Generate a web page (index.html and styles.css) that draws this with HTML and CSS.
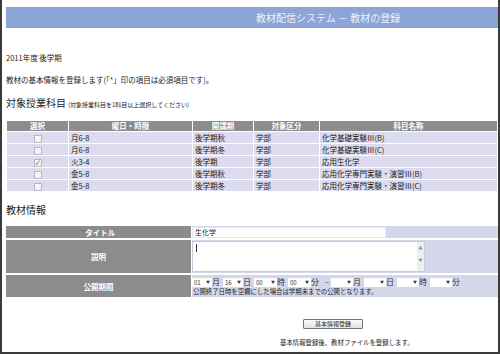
FILE: index.html
```html
<!DOCTYPE html>
<html>
<head>
<meta charset="UTF-8">
<title>教材の登録</title>
<link rel="stylesheet" href="styles.css">
</head>
<body>
<div class="frame">
    <!--タイトルバー-->
    <div class="head">教材配信システム － 教材の登録</div>

    <p class="term">2011年度 後学期</p>
    <p class="intro">教材の基本情報を登録します(「*」印の項目は必須項目です)。</p>

    <!--対象授業科目-->
    <h2 class="sec">対象授業科目<small>(対象授業科目を1科目以上選択してください)</small></h2>
    <table class="list">
        <thead>
        <tr>
            <th class="c1">選択</th>
            <th class="c2">曜日・時限</th>
            <th class="c3">開講期</th>
            <th class="c4">対象区分</th>
            <th>科目名称</th>
        </tr>
        </thead>
        <tbody>
        <tr>
            <td class="chk"><span class="cb"></span></td>
            <td>月6-8</td>
            <td>後学期秋</td>
            <td>学部</td>
            <td>化学基礎実験Ⅲ(B)</td>
        </tr>
        <tr>
            <td class="chk"><span class="cb"></span></td>
            <td>月6-8</td>
            <td>後学期冬</td>
            <td>学部</td>
            <td>化学基礎実験Ⅲ(C)</td>
        </tr>
        <tr>
            <td class="chk"><span class="cb on">✓</span></td>
            <td>火3-4</td>
            <td>後学期</td>
            <td>学部</td>
            <td>応用生化学</td>
        </tr>
        <tr>
            <td class="chk"><span class="cb"></span></td>
            <td>金5-8</td>
            <td>後学期秋</td>
            <td>学部</td>
            <td>応用化学専門実験・演習Ⅲ(B)</td>
        </tr>
        <tr>
            <td class="chk"><span class="cb"></span></td>
            <td>金5-8</td>
            <td>後学期冬</td>
            <td>学部</td>
            <td>応用化学専門実験・演習Ⅲ(C)</td>
        </tr>
        </tbody>
    </table>

    <!--教材情報-->
    <h2 class="sec sec2">教材情報</h2>
    <table class="form">
        <tr class="r-title">
            <th><span class="req">*</span>タイトル</th>
            <td><div class="txt">生化学</div></td>
        </tr>
        <tr class="r-desc">
            <th>説明</th>
            <td><div class="area"><span class="caret"></span><span class="bar">▲<br>▼</span></div></td>
        </tr>
        <tr class="r-date">
            <th>公開期間</th>
            <td>
                <div class="dates">
                    <span class="sel">01</span><span class="u">月</span>
                    <span class="sel">16</span><span class="u">日</span>
                    <span class="sel w">00</span><span class="u">時</span>
                    <span class="sel w">00</span><span class="u">分</span>
                    <span class="dash">－</span>
                    <span class="sel x"></span><span class="u">月</span>
                    <span class="sel x"></span><span class="u">日</span>
                    <span class="sel x"></span><span class="u">時</span>
                    <span class="sel x"></span><span class="u">分</span>
                </div>
                <div class="note">公開終了日時を空欄にした場合は学期末までの公開となります。</div>
            </td>
        </tr>
    </table>

    <div class="submit"><span class="btn">基本情報登録</span></div>
    <p class="after">基本情報登録後、教材ファイルを登録します。</p>
</div>
</body>
</html>
```

FILE: styles.css
```css
* {
    padding: 0;
    margin: 0;
}

body {
    font-family: "Noto Sans CJK JP", "Noto Sans", sans-serif;
    color: #222;
    background: #fff;
}

.frame {
    width: 500px;
    height: 354px;
    box-sizing: border-box;
    border: 2px solid #3a3a3a;
    border-top: 0;
    padding-left: 4px;
    overflow: hidden;
}

.head {
    margin-top: 7px;
    height: 21px;
    line-height: 21px;
    background-color: #8da4d6;
    color: #eef0fa;
    font-size: 10px;
    padding-left: 250px;
}

.term {
    margin-top: 25px;
    font-size: 7.5px;
    line-height: 10px;
}

.intro {
    margin-top: 12px;
    font-size: 7.5px;
    line-height: 10px;
}

.sec {
    margin-top: 11px;
    font-size: 10px;
    font-weight: normal;
    line-height: 14px;
}

.sec small {
    font-size: 6px;
    margin-left: 2px;
}

.sec2 {
    margin-top: 11px;
}

table {
    border-collapse: collapse;
    border-spacing: 0;
}

.list {
    margin-top: 8px;
    width: 492px;
    font-size: 7.5px;
}

.list th,
.list td {
    border: 1px solid #fff;
    padding: 0 2px;
    line-height: 11px;
    text-align: left;
}

.list th {
    background-color: #8c8c8c;
    color: #fff;
    font-weight: bold;
    text-align: center;
    line-height: 10px;
}

.list td {
    background-color: #dcdcee;
}

.list .c1 {
    width: 57px;
}

.list .c2 {
    width: 119px;
}

.list .c3 {
    width: 56px;
}

.list .c4 {
    width: 61px;
}

.list td.chk {
    text-align: center;
}

.cb {
    display: inline-block;
    width: 6px;
    height: 6px;
    border: 1px solid #b8b8c4;
    background: #f4f4f6;
    vertical-align: middle;
    font-size: 6px;
    line-height: 6px;
    text-align: center;
    color: #333;
}

.form {
    margin-top: 7px;
    width: 494px;
    border-collapse: separate;
    border-spacing: 1px 2px;
    margin-left: -1px;
    font-size: 7.5px;
}

.form th {
    width: 185px;
    background-color: #8c8c8c;
    color: #fff;
    font-weight: bold;
}

.form td {
    background-color: #d4d6ea;
    vertical-align: top;
}

.r-title th,
.r-title td {
    height: 11px;
}

.r-desc th,
.r-desc td {
    height: 33px;
}

.r-date th,
.r-date td {
    height: 22px;
}

.req {
    color: #d04848;
    font-size: 7px;
    vertical-align: top;
}

.txt {
    width: 190px;
    height: 9px;
    margin-top: 1px;
    background: #fff;
    border: 1px solid #e4e6f2;
    font-size: 7px;
    line-height: 9px;
    padding-left: 2px;
}

.area {
    width: 231px;
    height: 29px;
    margin-top: 1px;
    background: #fff;
    border: 1px solid #c8cadc;
    position: relative;
}

.caret {
    display: block;
    width: 1px;
    height: 8px;
    margin: 2px 0 0 3px;
    background: #333;
}

.bar {
    position: absolute;
    right: 0;
    top: 0;
    bottom: 0;
    width: 7px;
    background: #eee;
    font-size: 4px;
    line-height: 12px;
    color: #888;
    text-align: center;
}

.dates {
    margin-top: 2px;
    display: flex;
    align-items: center;
    line-height: 10px;
    color: #333;
}

.sel {
    display: inline-block;
    box-sizing: border-box;
    width: 20px;
    height: 9px;
    background: #fff;
    font-size: 6px;
    line-height: 9px;
    padding-left: 2px;
    position: relative;
}

.sel:after {
    content: "▼";
    position: absolute;
    right: 2px;
    top: 0;
    font-size: 4px;
}

.sel.w {
    width: 23px;
}

.sel.x {
    width: 22px;
}

.u {
    font-size: 8px;
    width: 8px;
    margin-right: 3px;
}

.dash {
    font-size: 6px;
    width: 6px;
    margin: 0 1px 0 2px;
}

.note {
    font-size: 6.4px;
    line-height: 9px;
    color: #222;
    padding-left: 1px;
}

.submit {
    margin-top: 20px;
    padding-left: 297px;
    font-size: 6px;
    line-height: 10px;
}

.btn {
    display: inline-block;
    vertical-align: top;
    width: 58px;
    height: 8px;
    border: 1px solid #777;
    border-radius: 1px;
    background: linear-gradient(#fbfbfb, #e2e2e2);
    font-size: 6px;
    line-height: 8px;
    text-align: center;
}

.after {
    margin-top: 9px;
    padding-left: 274px;
    font-size: 6.4px;
    line-height: 9px;
}
```
